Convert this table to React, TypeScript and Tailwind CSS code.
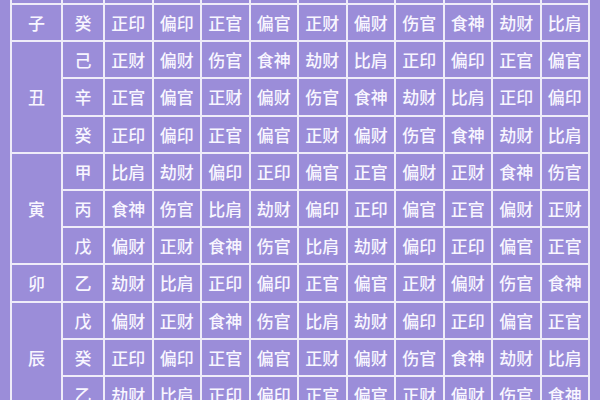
import React from "react";

type Row = { branch?: string; span?: number; stem: string; gods: string[] };

const rows: Row[] = [
  { branch: "子", span: 1, stem: "癸", gods: ["正印", "偏印", "正官", "偏官", "正财", "偏财", "伤官", "食神", "劫财", "比肩"] },
  { branch: "丑", span: 3, stem: "己", gods: ["正财", "偏财", "伤官", "食神", "劫财", "比肩", "正印", "偏印", "正官", "偏官"] },
  { stem: "辛", gods: ["正官", "偏官", "正财", "偏财", "伤官", "食神", "劫财", "比肩", "正印", "偏印"] },
  { stem: "癸", gods: ["正印", "偏印", "正官", "偏官", "正财", "偏财", "伤官", "食神", "劫财", "比肩"] },
  { branch: "寅", span: 3, stem: "甲", gods: ["比肩", "劫财", "偏印", "正印", "偏官", "正官", "偏财", "正财", "食神", "伤官"] },
  { stem: "丙", gods: ["食神", "伤官", "比肩", "劫财", "偏印", "正印", "偏官", "正官", "偏财", "正财"] },
  { stem: "戊", gods: ["偏财", "正财", "食神", "伤官", "比肩", "劫财", "偏印", "正印", "偏官", "正官"] },
  { branch: "卯", span: 1, stem: "乙", gods: ["劫财", "比肩", "正印", "偏印", "正官", "偏官", "正财", "偏财", "伤官", "食神"] },
  { branch: "辰", span: 3, stem: "戊", gods: ["偏财", "正财", "食神", "伤官", "比肩", "劫财", "偏印", "正印", "偏官", "正官"] },
  { stem: "癸", gods: ["正印", "偏印", "正官", "偏官", "正财", "偏财", "伤官", "食神", "劫财", "比肩"] },
  { stem: "乙", gods: ["劫财", "比肩", "正印", "偏印", "正官", "偏官", "正财", "偏财", "伤官", "食神"] },
];

const cell = "bg-[#9b8dd9] flex items-center justify-center";

export default function App() {
  return (
    <div
      className="w-[600px] h-[400px] overflow-hidden bg-[#9b8dd9] text-[17px] font-medium text-[#f8f6ff] leading-none"
      style={{ fontFamily: '"Noto Sans CJK SC", "Noto Sans", sans-serif' }}
    >
      <div className="ml-[10px] w-[580px] bg-[#efecf9] px-[2px] pb-[2px] grid grid-cols-[49px_40px_repeat(10,1fr)] grid-rows-[3px_repeat(11,35.2px)] gap-[2px]">
        {/* 上一行被裁掉的部分 */}
        {Array.from({ length: 12 }).map((_, i) => (
          <div key={"top" + i} className="bg-[#9b8dd9]" />
        ))}

        {rows.map((r, ri) => (
          <React.Fragment key={ri}>
            {r.branch && (
              <div className={`${cell} ${r.span === 3 ? "row-span-3" : ""}`}>{r.branch}</div>
            )}
            <div className={cell}>{r.stem}</div>
            {r.gods.map((g, gi) => (
              <div key={gi} className={cell}>
                {g}
              </div>
            ))}
          </React.Fragment>
        ))}
      </div>
    </div>
  );
}
